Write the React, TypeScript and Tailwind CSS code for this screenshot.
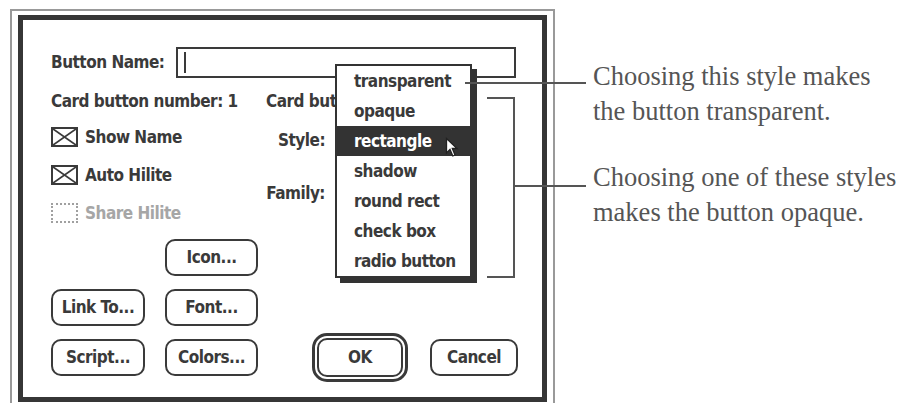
import React from "react";

const ui = { fontFamily: '"DejaVu Sans Condensed", "DejaVu Sans", sans-serif' };
const serif = { fontFamily: '"Liberation Serif", "Times New Roman", serif' };

function Check({ on = true, dim = false }: { on?: boolean; dim?: boolean }) {
  return (
    <div
      className={`w-[27px] h-[20px] shrink-0 ${dim ? "border-2 border-dotted border-[#a0a0a0]" : "border-2 border-[#3a3a3a]"}`}
    >
      {on && (
        <svg width="23" height="16" viewBox="0 0 23 16" className="block">
          <line x1="0" y1="0" x2="23" y2="16" stroke="#3a3a3a" strokeWidth="1.8" />
          <line x1="23" y1="0" x2="0" y2="16" stroke="#3a3a3a" strokeWidth="1.8" />
        </svg>
      )}
    </div>
  );
}

function Btn({ label, w }: { label: string; w: string }) {
  return (
    <div
      className={`${w} h-[37px] shrink-0 border-2 border-[#3a3a3a] rounded-[10px] flex items-center justify-center`}
    >
      {label}
    </div>
  );
}

const items = ["transparent", "opaque", "rectangle", "shadow", "round rect", "check box", "radio button"];

export default function App() {
  return (
    <div className="relative w-[911px] h-[403px] overflow-hidden bg-white flex items-start">
      {/* Dialog */}
      <div className="ml-[10px] mt-[9px] shrink-0 w-[545px] h-[400px] border-2 border-[#999] pt-[4px] px-[6px]">
        <div
          className="h-[387px] border-[5px] border-[#363636] pl-[28px] text-[17px] font-bold tracking-[-0.5px] text-[#3a3a3a] leading-none"
          style={ui}
        >
          {/* Row 1 */}
          <div className="mt-[27px] flex items-center">
            <div className="w-[125px] shrink-0">Button Name:</div>
            <div className="w-[340px] h-[31px] border-2 border-[#3a3a3a] flex items-center pl-[6px]">
              <div className="w-[2px] h-[21px] bg-[#3a3a3a]" />
            </div>
          </div>

          {/* Row 2 */}
          <div className="flex items-start">
            <div className="w-[199px] shrink-0 flex flex-col">
              <div className="mt-[13px] h-[20px] flex items-center whitespace-nowrap">Card button number: 1</div>
              <div className="mt-[16px] h-[20px] flex items-center gap-[7px]">
                <Check />
                <span>Show Name</span>
              </div>
              <div className="mt-[18px] h-[20px] flex items-center gap-[7px]">
                <Check />
                <span>Auto Hilite</span>
              </div>
              <div className="mt-[18px] h-[20px] flex items-center gap-[7px] text-[#a6a6a6]">
                <Check on={false} dim />
                <span>Share Hilite</span>
              </div>
            </div>
            <div className="flex flex-col">
              <div className="mt-[13px] h-[20px] ml-[16px] w-[69px] overflow-hidden flex items-center whitespace-nowrap">
                Card button ID: 1
              </div>
              <div className="mt-[19px] h-[20px] w-[75px] flex items-center justify-end">Style:</div>
              <div className="mt-[33px] h-[20px] w-[75px] flex items-center justify-end">Family:</div>
            </div>
          </div>

          {/* Buttons */}
          <div className="mt-[16px] pl-[114px] flex">
            <Btn label="Icon..." w="w-[93px]" />
          </div>
          <div className="mt-[13px] flex gap-[20px]">
            <Btn label="Link To..." w="w-[94px]" />
            <Btn label="Font..." w="w-[93px]" />
          </div>
          <div className="mt-[7px] h-[49px] flex items-center">
            <Btn label="Script..." w="w-[94px]" />
            <div className="ml-[20px]">
              <Btn label="Colors..." w="w-[93px]" />
            </div>
            <div className="ml-[54px] w-[96px] h-[49px] border-[3px] border-[#3a3a3a] rounded-[15px] p-[2px]">
              <div className="w-full h-full border-2 border-[#3a3a3a] rounded-[10px] flex items-center justify-center">
                OK
              </div>
            </div>
            <div className="ml-[22px]">
              <Btn label="Cancel" w="w-[88px]" />
            </div>
          </div>
        </div>
      </div>

      {/* Annotations */}
      <div className="ml-[38px] mt-[59px] text-[26.5px] leading-[35px] text-[#555] whitespace-nowrap" style={serif}>
        <p>Choosing this style makes</p>
        <p>the button transparent.</p>
        <p className="mt-[31px]">Choosing one of these styles</p>
        <p>makes the button opaque.</p>
      </div>

      {/* Popup menu */}
      <div
        className="absolute left-[335px] top-[64px] w-[137px] border-2 border-[#333] bg-white shadow-[5px_5px_0_#333] text-[17px] font-bold tracking-[-0.5px] leading-none"
        style={ui}
      >
        {items.map((it) => (
          <div
            key={it}
            className={`h-[30px] flex items-center pl-[17px] whitespace-nowrap ${
              it === "rectangle" ? "bg-[#333] text-white" : "text-[#3a3a3a]"
            }`}
          >
            {it}
          </div>
        ))}
      </div>

      {/* Cursor */}
      <svg className="absolute left-[445px] top-[137px]" width="14" height="22" viewBox="0 0 14 22">
        <path d="M1.5 1.5 L1.5 16 L5 12.5 L7.8 19 L10 18 L7.3 11.5 L12 11.5 Z" fill="white" stroke="#222" strokeWidth="1.3" />
      </svg>

      {/* Callout lines */}
      <div className="absolute left-[465px] top-[82px] w-[121px] h-[2px] bg-[#555]" />
      <div className="absolute left-[487px] top-[97px] w-[28px] h-[2px] bg-[#555]" />
      <div className="absolute left-[513px] top-[97px] w-[2px] h-[181px] bg-[#555]" />
      <div className="absolute left-[487px] top-[276px] w-[28px] h-[2px] bg-[#555]" />
      <div className="absolute left-[513px] top-[185px] w-[73px] h-[2px] bg-[#555]" />
    </div>
  );
}
